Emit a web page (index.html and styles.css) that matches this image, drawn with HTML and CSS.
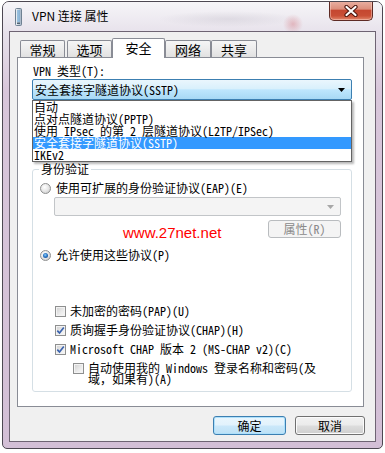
FILE: index.html
```html
<!DOCTYPE html>
<html lang="zh-CN">
<head>
<meta charset="utf-8">
<title>VPN 连接 属性</title>
<link rel="stylesheet" href="styles.css">
</head>
<body>
<div class="window">
  <div class="titlebar">
    <svg class="app-icon" width="9" height="18" viewBox="0 0 9 18">
      <defs>
        <linearGradient id="ig" x1="0" y1="0" x2="1" y2="0">
          <stop offset="0" stop-color="#f4f7fa"/>
          <stop offset="1" stop-color="#9fb0c2"/>
        </linearGradient>
      </defs>
      <rect x="1.5" y="0.5" width="6" height="17" rx="1" fill="url(#ig)" stroke="#6f8192"/>
      <path d="M3 3h3M3 5h3M3 7h3M3 9h3M3 11h3M3 13h3" stroke="#5aa0d6" stroke-width="1"/>
      <rect x="3" y="14.5" width="3" height="1.5" fill="#4f6273"/>
    </svg>
    <span class="title">VPN 连接 属性</span>
    <div class="close">
      <svg width="14" height="12" viewBox="0 0 14 12">
        <path d="M2.5 2 L11.5 10 M11.5 2 L2.5 10" stroke="#4a140c" stroke-width="4.2" stroke-linecap="round"/>
        <path d="M2.5 2 L11.5 10 M11.5 2 L2.5 10" stroke="#ffffff" stroke-width="2.2" stroke-linecap="round"/>
      </svg>
    </div>
  </div>
  <div class="client">
    <div class="tabs">
      <div class="tab first">常规</div>
      <div class="tab">选项</div>
      <div class="tab active">安全</div>
      <div class="tab">网络</div>
      <div class="tab">共享</div>
    </div>
    <div class="panel">
      <div class="label">VPN 类型(T):</div>
      <div class="combo main">
        <span class="combo-text">安全套接字隧道协议(SSTP)</span>
        <svg class="arrow" width="7" height="4" viewBox="0 0 7 4"><polygon points="0,0 7,0 3.5,4" fill="#000"/></svg>
        <ul class="list">
          <li>自动</li>
          <li>点对点隧道协议(PPTP)</li>
          <li>使用 IPsec 的第 2 层隧道协议(L2TP/IPSec)</li>
          <li class="sel">安全套接字隧道协议(SSTP)</li>
          <li>IKEv2</li>
        </ul>
      </div>
      <fieldset class="group">
        <legend>身份验证</legend>
        <div class="opt radio-row first-radio"><span class="radio"></span><span class="sans">使用可扩展的身份验证协议(EAP)(E)</span></div>
        <div class="combo disabled">
          <svg class="arrow" width="7" height="4" viewBox="0 0 7 4"><polygon points="0,0 7,0 3.5,4" fill="#a7a7a7"/></svg>
        </div>
        <div class="btn-row"><button class="btn off">属性(R)</button></div>
        <div class="opt radio-row second-radio"><span class="radio checked"></span><span class="sans">允许使用这些协议(P)</span></div>
        <div class="opt chk-row first-chk"><span class="check"></span><span>未加密的密码(PAP)(U)</span></div>
        <div class="opt chk-row"><span class="check"><svg width="9" height="9" viewBox="0 0 9 9"><path d="M1.3 4.6 L3.5 7 L7.8 1.5" fill="none" stroke="#3b63ae" stroke-width="1.7"/></svg></span><span>质询握手身份验证协议(CHAP)(H)</span></div>
        <div class="opt chk-row"><span class="check"><svg width="9" height="9" viewBox="0 0 9 9"><path d="M1.3 4.6 L3.5 7 L7.8 1.5" fill="none" stroke="#3b63ae" stroke-width="1.7"/></svg></span><span>Microsoft CHAP 版本 2 (MS-CHAP v2)(C)</span></div>
        <div class="opt chk-row nested"><span class="check"></span><span class="wrap">自动使用我的 Windows 登录名称和密码(及<br>域，如果有)(A)</span></div>
      </fieldset>
      <div class="watermark">www.27net.net</div>
    </div>
    <div class="actions">
      <button class="btn default">确定</button>
      <button class="btn cancel">取消</button>
    </div>
  </div>
</div>
</body>
</html>
```
FILE: styles.css
```css
html, body {
  margin: 0;
  padding: 0;
  background: #ffffff;
  width: 385px;
  height: 453px;
  overflow: hidden;
}

body {
  font-family: "Noto Sans Mono CJK SC", "Liberation Mono", "Noto Sans CJK SC", monospace;
  font-size: 12px;
  color: #000;
}

.window {
  margin: 1px 0 0 2px;
  width: 381px;
  height: 448px;
  box-sizing: border-box;
  border: 1px solid #4d4852;
  border-radius: 7px 7px 5px 5px;
  background: linear-gradient(to bottom, #eeecf1 0px, #e4dde8 40px, #d8c6da 90px, #d3bfd6 100%);
  display: flex;
  flex-direction: column;
  overflow: hidden;
}

.titlebar {
  height: 29px;
  flex: none;
  display: flex;
  align-items: flex-start;
  background:
    radial-gradient(circle 10px at 290px 22px, rgba(205, 90, 100, 0.35), rgba(205, 90, 100, 0)),
    radial-gradient(ellipse 70px 8px at 225px 17px, rgba(150, 145, 160, 0.18), rgba(150, 145, 160, 0)),
    linear-gradient(to bottom, #f6f5f8, #e8e3ec);
}

.app-icon {
  margin: 6px 0 0 11px;
  flex: none;
}

.title {
  font-family: "Noto Sans CJK SC", sans-serif;
  font-size: 12px;
  line-height: 16px;
  margin: 6px 0 0 9px;
  color: #000;
}

.close {
  margin: -1px 9px 0 auto;
  width: 44px;
  height: 20px;
  box-sizing: border-box;
  border: 1px solid #5e2a24;
  border-top: none;
  border-radius: 0 0 5px 5px;
  background: linear-gradient(to bottom, #eab2a4 0%, #dd8f7c 42%, #c54730 50%, #c94f36 78%, #e2876c 100%);
  box-shadow: inset 0 0 0 1px rgba(255, 220, 210, 0.45);
  display: flex;
  align-items: center;
  justify-content: center;
}

.client {
  margin: 0 6px 6px 6px;
  height: 411px;
  box-sizing: border-box;
  border: 1px solid #6e6473;
  background: #f0f0f0;
}

.tabs {
  display: flex;
  align-items: flex-end;
  height: 25px;
  box-sizing: border-box;
  padding-top: 6px;
  margin-left: 10px;
  font-family: "Noto Sans CJK SC", sans-serif;
  font-size: 13px;
}

.tab {
  width: 45px;
  height: 17px;
  box-sizing: border-box;
  border: 1px solid #898c95;
  border-bottom: none;
  border-radius: 2px 2px 0 0;
  background: linear-gradient(to bottom, #f5f5f5 0%, #ececec 50%, #e1e1e1 100%);
  text-align: center;
  line-height: 15px;
  padding-top: 1px;
}

.tab.first {
  margin-right: 2px;
}

.tab.active {
  width: 53px;
  height: 20px;
  margin-bottom: -1px;
  background: #ffffff;
  position: relative;
  z-index: 2;
}

.tab.active + .tab {
  width: 46px;
}

.tab:last-child {
  width: 46px;
}

.panel {
  margin-left: 7px;
  width: 347px;
  height: 350px;
  box-sizing: border-box;
  border: 1px solid #898c95;
  background: #ffffff;
  position: relative;
}

.label {
  margin: 7px 0 0 15px;
  line-height: 12px;
  height: 12px;
}

.combo {
  box-sizing: border-box;
  border-radius: 2px;
  display: flex;
  align-items: center;
}

.combo.main {
  margin: 2px 0 0 14px;
  width: 320px;
  height: 21px;
  border: 1px solid #3c7fb1;
  background: linear-gradient(to bottom, #eaf6fd 0%, #d9f0fc 45%, #bee6fd 52%, #a7d9f5 100%);
  padding-left: 2px;
  position: relative;
}

.combo-text {
  line-height: 12px;
}

.combo .arrow {
  margin-left: auto;
  margin-right: 6px;
  flex: none;
}

.list {
  position: absolute;
  top: 20px;
  left: -1px;
  width: 320px;
  box-sizing: border-box;
  margin: 0;
  padding: 0;
  list-style: none;
  background: #ffffff;
  border: 1px solid #646464;
  box-shadow: 2px 2px 2px rgba(0, 0, 0, 0.28);
  z-index: 5;
}

.list li {
  height: 12px;
  line-height: 12px;
  padding-left: 1px;
  white-space: nowrap;
}

.list li.sel {
  background: #3399ff;
  color: #ffffff;
}

.group {
  margin: 63px 0 0 14px;
  width: 320px;
  box-sizing: border-box;
  border: 1px solid #d5dfe5;
  border-radius: 3px;
  padding: 0 0 7px 0;
  min-width: 0;
}

.group legend {
  margin-left: 6px;
  padding: 0 2px;
  line-height: 12px;
  font-family: "Noto Sans CJK SC", sans-serif;
  font-size: 12px;
}

.opt {
  display: flex;
  align-items: center;
  line-height: 12px;
  height: 12px;
  white-space: nowrap;
}

.sans {
  font-family: "Noto Sans Mono CJK SC", "Liberation Mono", "Noto Sans CJK SC", monospace;
}

.radio-row {
  padding-left: 7px;
}

.first-radio {
  margin-top: 7px;
}

.second-radio {
  margin-top: 11px;
}

.radio {
  width: 11px;
  height: 11px;
  box-sizing: border-box;
  border-radius: 50%;
  border: 1px solid #8e8f8f;
  background: radial-gradient(circle at 40% 35%, #ffffff 0%, #e9e9e9 45%, #c4c4c4 100%);
  margin-right: 5px;
  flex: none;
  display: flex;
  align-items: center;
  justify-content: center;
}

.radio.checked::after {
  content: "";
  width: 5px;
  height: 5px;
  border-radius: 50%;
  background: radial-gradient(circle at 45% 40%, #8fd0f8 0%, #2c78c8 45%, #0d3a7e 100%);
}

.combo.disabled {
  margin: 3px 10px 0 21px;
  height: 19px;
  border: 1px solid #c2c5c8;
  background: #f4f4f4;
}

.btn-row {
  display: flex;
  justify-content: flex-end;
  margin: 4px 10px 0 0;
}

.btn {
  font-family: "Noto Sans CJK SC", sans-serif;
  font-size: 12px;
  line-height: 16px;
  padding: 0;
  margin: 0;
  box-sizing: border-box;
  border-radius: 3px;
  color: #000;
}

.btn.off {
  width: 73px;
  height: 18px;
  border: 1px solid #b9bcbf;
  background: #f4f4f4;
  color: #8a8a8a;
  font-family: "Noto Sans Mono CJK SC", "Liberation Mono", "Noto Sans CJK SC", monospace;
}

.chk-row {
  padding-left: 22px;
  margin-top: 7px;
}

.chk-row.first-chk {
  margin-top: 44px;
}

.check {
  width: 11px;
  height: 11px;
  box-sizing: border-box;
  border: 1px solid #8e8f8f;
  background: linear-gradient(135deg, #cfcfcf 0%, #ececec 60%, #f9f9f9 100%);
  box-shadow: inset 0 0 0 1px #f3f3f3;
  margin-right: 4px;
  flex: none;
  display: flex;
  align-items: center;
  justify-content: center;
}

.chk-row.nested {
  padding-left: 40px;
  height: auto;
  align-items: flex-start;
}

.chk-row.nested .check {
  margin-top: 1px;
}

.wrap {
  line-height: 11px;
}

.watermark {
  position: absolute;
  left: 105px;
  top: 167px;
  font-family: "Liberation Sans", Arial, sans-serif;
  font-size: 15px;
  line-height: 15px;
  color: #ff0000;
  z-index: 3;
}

.actions {
  display: flex;
  justify-content: flex-end;
  gap: 9px;
  margin: 9px 10px 0 0;
}

.btn.default {
  width: 73px;
  height: 19px;
  border: 1px solid #3c7fb1;
  background: linear-gradient(to bottom, #eaf6fd 0%, #e2f2fc 48%, #cbe8fa 52%, #bde1f6 100%);
  box-shadow: inset 0 0 0 1px #aee0fb;
}

.btn.cancel {
  width: 70px;
  height: 19px;
  border: 1px solid #707070;
  background: linear-gradient(to bottom, #f2f2f2 0%, #ebebeb 48%, #dddddd 52%, #cfcfcf 100%);
  box-shadow: inset 0 0 0 1px #fbfbfb;
}
```
